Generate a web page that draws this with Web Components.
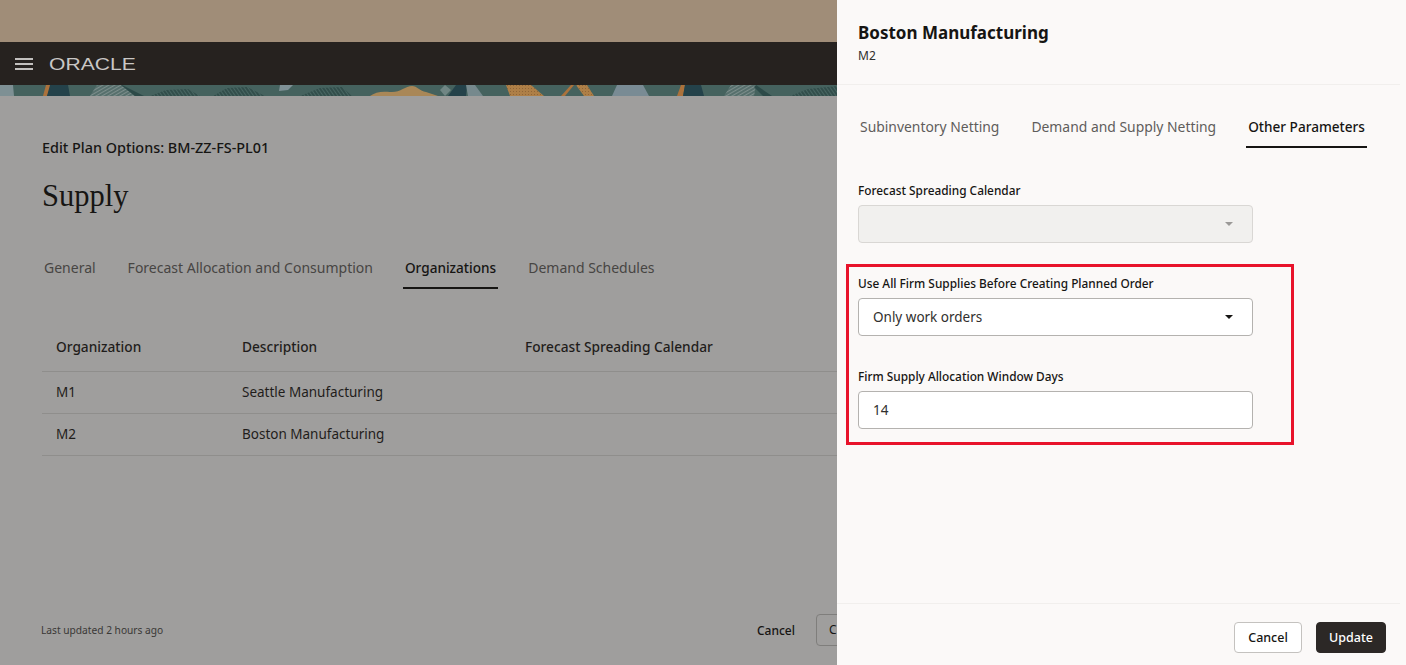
<!DOCTYPE html>
<html lang="en">
<head>
<meta charset="utf-8">
<title>Edit Plan Options</title>
<style>
    html, body { margin: 0; height: 100%; overflow: hidden; }
    body { font-family: "Noto Sans", "Open Sans", sans-serif; }
</style>
</head>
<body>
<plan-screen></plan-screen>

<script>
class TabBar extends HTMLElement {
    constructor() {
        super();
        const tabs = (this.getAttribute('tabs') || '').split('|');
        const active = this.getAttribute('active');
        this.attachShadow({ mode: 'open' }).innerHTML = `
            <style>
                :host { display: flex; gap: 28px; color: var(--tab-color, #474543); font-size: var(--tab-size, 14px); }
                span { display: block; padding: 0 2px 9px; line-height: 20px; white-space: nowrap; border-bottom: 2px solid transparent; }
                .on { color: #161513; font-size: 13.6px; font-weight: 500; border-bottom-color: #161513; }
            </style>
            ${tabs.map(t => `<span class="${t === active ? 'on' : ''}">${t}</span>`).join('')}
        `;
    }
}
customElements.define('tab-bar', TabBar);

class LeafStrip extends HTMLElement {
    constructor() {
        super();
        this.attachShadow({ mode: 'open' }).innerHTML = `
            <style>
                :host { display: block; height: 11px; overflow: hidden; }
                svg { display: block; }
            </style>
            <svg width="837" height="11" viewBox="0 0 837 11" aria-hidden="true">
                <defs>
                    <pattern id="hatch" width="3" height="3" patternUnits="userSpaceOnUse" patternTransform="rotate(60)">
                        <rect width="3" height="3" fill="#566f6c"/>
                        <rect width="1" height="3" fill="#7d8e8c"/>
                    </pattern>
                    <pattern id="leaf" width="3" height="3" patternUnits="userSpaceOnUse" patternTransform="rotate(-35)">
                        <rect width="3" height="3" fill="#324e4b"/>
                        <rect width="1" height="3" fill="#486662"/>
                    </pattern>
                    <pattern id="dots" width="3" height="3" patternUnits="userSpaceOnUse">
                        <rect width="3" height="3" fill="#ae7f47"/>
                        <rect width="1" height="1" fill="#8f6538"/>
                    </pattern>
                </defs>
                <rect width="837" height="11" fill="#45625e"/>
                <path d="M0 0h13l1 11H0z" fill="#7e9094"/>
                <path d="M43 11l3-11h5l-4 11z" fill="#ab723c"/>
                <path d="M50 0h18l2 11H47z" fill="#24424a"/>
                <path d="M90 11l7-11h24l14 11z" fill="url(#hatch)"/>
                <path d="M122 0l22 11h-9l-14-11z" fill="#2c4a48"/>
                <path d="M150 11l16-6 22-1 12 7z" fill="url(#leaf)"/>
                <path d="M213 11l14-8 20-1 18 9z" fill="url(#leaf)"/>
                <path d="M280 0h13l-5 5-9 1z" fill="#7f9196"/>
                <path d="M300 11l20-8 22-1 10 9z" fill="url(#leaf)"/>
                <path d="M370 11c5-4 12-5 20-4 10 1 15-6 22-6 5 0 8 5 14 6l12 4z" fill="#a98757"/>
                <path d="M440 5l5-5 6 5-6 6z" fill="#708684"/>
                <path d="M448 11l8-11h11l-1 11z" fill="#24424a"/>
                <path d="M466 0h9l8 11h-15z" fill="#76898d"/>
                <path d="M506 0h25l13 11h-34z" fill="url(#dots)"/>
                <path d="M561 11l10-11h3l-9 11z" fill="#ab723c"/>
                <path d="M576 0h11l7 11h-10z" fill="url(#dots)"/>
                <path d="M612 11l5-11h26l6 11z" fill="#798b94"/>
                <path d="M677 11l4-11h4l-2 11z" fill="#ab723c"/>
                <path d="M685 0h16l3 11h-21z" fill="#24424a"/>
                <path d="M724 11l7-11h25l-2 11z" fill="url(#hatch)"/>
                <path d="M756 0l16 11h-9l-9-9z" fill="#2c4a48"/>
                <path d="M790 11l18-7 29-3v10z" fill="url(#leaf)"/>
            </svg>
        `;
    }
}
customElements.define('leaf-strip', LeafStrip);

class AppBar extends HTMLElement {
    constructor() {
        super();
        this.attachShadow({ mode: 'open' }).innerHTML = `
            <style>
                :host { display: flex; align-items: center; height: 43px; padding-left: 15px; gap: 16px; background: #26221f; color: #c9c7c5; }
                svg { display: block; }
                .logo { font-family: "Liberation Sans", sans-serif; font-size: 16.5px; line-height: 1; padding-top: 1px; transform: scaleX(1.28); transform-origin: left center; }
            </style>
            <svg width="18" height="14" viewBox="0 0 18 14" fill="#c2c0be" aria-hidden="true">
                <rect y="1" width="18" height="2"/>
                <rect y="6" width="18" height="2"/>
                <rect y="11" width="18" height="2"/>
            </svg>
            <span class="logo">ORACLE</span>
        `;
    }
}
customElements.define('app-bar', AppBar);

class OrgTable extends HTMLElement {
    constructor() {
        super();
        this.attachShadow({ mode: 'open' }).innerHTML = `
            <style>
                :host { display: block; font-size: 13.5px; color: #1f1d1b; }
                .row { display: grid; grid-template-columns: 186px 283px 1fr; padding: 0 0 1px 14px; height: 42px; box-sizing: border-box; align-items: center; border-bottom: 1px solid #8f8e8c; }
                .head { height: 49px; padding-bottom: 2px; font-size: 13.7px; font-weight: 500; }
            </style>
            <div class="row head"><span>Organization</span><span>Description</span><span>Forecast Spreading Calendar</span></div>
            <div class="row"><span>M1</span><span>Seattle Manufacturing</span><span></span></div>
            <div class="row"><span>M2</span><span>Boston Manufacturing</span><span></span></div>
        `;
    }
}
customElements.define('org-table', OrgTable);

class PlanPage extends HTMLElement {
    constructor() {
        super();
        this.attachShadow({ mode: 'open' }).innerHTML = `
            <style>
                :host { display: flex; flex-direction: column; height: 665px; overflow: hidden; background: #9f9e9d; color: #161513; }
                .top { height: 42px; background: #a08d78; flex: none; }
                app-bar, leaf-strip { flex: none; }
                main { flex: 1; display: flex; flex-direction: column; padding: 41px 0 0 42px; min-height: 0; }
                .crumb { font-size: 14.4px; line-height: 20px; font-weight: 500; margin-top: 1px; }
                h1 { margin: 20px 0 0; font: 400 30.5px/36px "Liberation Serif", "DejaVu Serif", serif; }
                tab-bar { margin: 44px 0 0; }
                org-table { margin-top: 34px; }
                footer { margin-top: auto; height: 70px; display: flex; align-items: center; font-size: 12px; white-space: nowrap; }
                small { font-size: 10.2px; color: #3a3836; margin-left: -1px; }
                .cancel { margin-left: auto; margin-right: 21px; font-weight: 500; }
                .ghost { flex: none; width: 60px; height: 32px; margin-right: -39px; padding-left: 12px; box-sizing: border-box; border: 1px solid #7f7e7c; border-radius: 4px; line-height: 30px; }
            </style>
            <div class="top"></div>
            <app-bar></app-bar>
            <leaf-strip></leaf-strip>
            <main>
                <div class="crumb">Edit Plan Options: BM-ZZ-FS-PL01</div>
                <h1>Supply</h1>
                <tab-bar tabs="General|Forecast Allocation and Consumption|Organizations|Demand Schedules" active="Organizations"></tab-bar>
                <org-table></org-table>
                <footer>
                    <small>Last updated 2 hours ago</small>
                    <span class="cancel">Cancel</span>
                    <span class="ghost">C</span>
                </footer>
            </main>
        `;
    }
}
customElements.define('plan-page', PlanPage);

class FormField extends HTMLElement {
    constructor() {
        super();
        const caret = this.hasAttribute('caret');
        const disabled = this.hasAttribute('disabled');
        this.attachShadow({ mode: 'open' }).innerHTML = `
            <style>
                :host { display: block; width: 395px; }
                label { display: block; font-size: 11.85px; line-height: 16px; font-weight: 500; color: #161513; margin-bottom: 7px; }
                .box { display: flex; align-items: center; justify-content: space-between; height: 38px; box-sizing: border-box; padding: 0 19px 0 14px; background: #fff; border: 1px solid #b4b2af; border-radius: 4px; font-size: 13.5px; color: #312f2d; }
                .box.off { background: #f1f0ee; border-color: #d9d7d4; }
                i { width: 0; height: 0; border: 4px solid transparent; border-top-color: #161513; border-bottom: 0; }
                .off i { border-top-color: #9b9997; }
            </style>
            <label>${this.getAttribute('label')}</label>
            <div class="box ${disabled ? 'off' : ''}"><span><slot></slot></span>${caret ? '<i></i>' : ''}</div>
        `;
    }
}
customElements.define('form-field', FormField);

class OrgDrawer extends HTMLElement {
    constructor() {
        super();
        this.attachShadow({ mode: 'open' }).innerHTML = `
            <style>
                :host { display: flex; flex-direction: column; height: 665px; background: #fbf9f8; color: #161513; }
                header { flex: none; height: 85px; box-sizing: border-box; padding: 21px 21px 0; margin-right: 6px; border-bottom: 1px solid #f1efed; }
                h2 { margin: 0; font-size: 17px; line-height: 24px; font-weight: 700; }
                header div { font-size: 12px; line-height: 18px; margin-top: 2px; color: #312f2d; }
                .body { flex: 1; padding: 32px 0 0 21px; }
                tab-bar { --tab-color: #5f5d5b; --tab-size: 13.9px; }
                .fields { margin-top: 34px; display: flex; flex-direction: column; }
                .mark { position: relative; margin-top: 32px; display: flex; flex-direction: column; gap: 32px; }
                .mark::before { content: ""; position: absolute; left: -12px; top: -11px; width: 448px; height: 181px; box-sizing: border-box; border: 3px solid #e8132b; pointer-events: none; }
                footer { flex: none; height: 62px; box-sizing: border-box; margin-right: 6px; border-top: 1px solid #f1efed; padding: 5px 14px 0 0; display: flex; align-items: center; justify-content: flex-end; gap: 14px; }
                button { font: 500 12.5px "Noto Sans", sans-serif; height: 31px; border-radius: 4px; padding: 0; }
                .sec { width: 68px; background: #fff; border: 1px solid #c4c2bf; color: #161513; }
                .pri { width: 70px; background: #2c2826; border: 1px solid #2c2826; color: #fff; }
            </style>
            <header>
                <h2>Boston Manufacturing</h2>
                <div>M2</div>
            </header>
            <div class="body">
                <tab-bar tabs="Subinventory Netting|Demand and Supply Netting|Other Parameters" active="Other Parameters"></tab-bar>
                <div class="fields">
                    <form-field label="Forecast Spreading Calendar" caret disabled></form-field>
                    <div class="mark">
                        <form-field label="Use All Firm Supplies Before Creating Planned Order" caret>Only work orders</form-field>
                        <form-field label="Firm Supply Allocation Window Days">14</form-field>
                    </div>
                </div>
            </div>
            <footer>
                <button class="sec">Cancel</button>
                <button class="pri">Update</button>
            </footer>
        `;
    }
}
customElements.define('org-drawer', OrgDrawer);

class PlanScreen extends HTMLElement {
    constructor() {
        super();
        this.attachShadow({ mode: 'open' }).innerHTML = `
            <style>
                :host { display: grid; grid-template-columns: 837px 569px; height: 665px; overflow: hidden; }
                plan-page { min-width: 0; }
            </style>
            <plan-page></plan-page>
            <org-drawer></org-drawer>
        `;
    }
}
customElements.define('plan-screen', PlanScreen);
</script>
</body>
</html>
